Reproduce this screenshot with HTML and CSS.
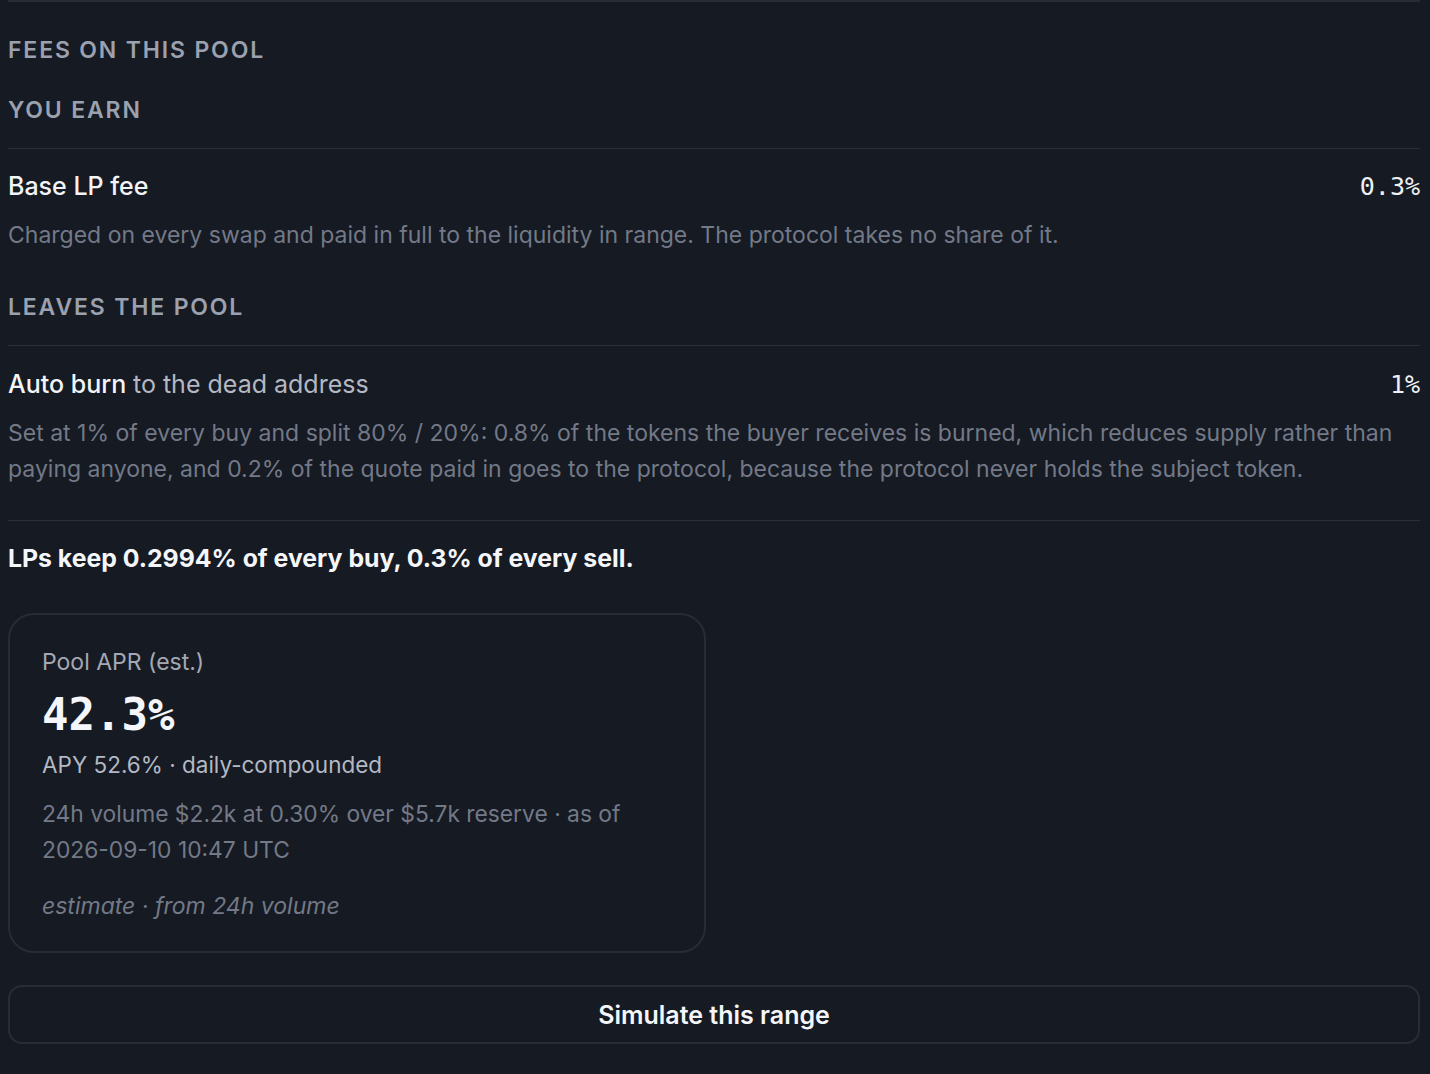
FILE: index.html
```html
<!DOCTYPE html>
<html>
<head>
<meta charset="utf-8">
<link rel="stylesheet" href="styles.css">
</head>
<body>
<section class="fees">
  <h2 class="eyebrow">Fees on this pool</h2>
  <h3 class="group-title">You earn</h3>
  <div class="fee-row">
    <div class="fee-head">
      <span class="fee-name">Base LP fee</span>
      <span class="fee-value">0.3%</span>
    </div>
    <p class="fee-desc">Charged on every swap and paid in full to the liquidity in range. The protocol takes no share of it.</p>
  </div>
  <h3 class="group-title">Leaves the pool</h3>
  <div class="fee-row">
    <div class="fee-head">
      <span class="fee-name">Auto burn <span class="fee-sub">to the dead address</span></span>
      <span class="fee-value">1%</span>
    </div>
    <p class="fee-desc">Set at 1% of every buy and split 80% / 20%: 0.8% of the tokens the buyer receives is burned, which reduces supply rather than paying anyone, and 0.2% of the quote paid in goes to the protocol, because the protocol never holds the subject token.</p>
  </div>
  <p class="summary">LPs keep 0.2994% of every buy, 0.3% of every sell.</p>
  <div class="cards">
    <div class="card">
      <div class="card-label">Pool APR (est.)</div>
      <div class="card-value">42.3%</div>
      <div class="card-apy">APY 52.6% · daily-compounded</div>
      <div class="card-meta">24h volume $2.2k at 0.30% over $5.7k reserve · as of 2026-09-10 10:47 UTC</div>
      <div class="card-note">estimate · from 24h volume</div>
    </div>
  </div>
  <button class="simulate">Simulate this range</button>
</section>
</body>
</html>
```

FILE: styles.css
```css
html, body {
  background: #161a23;
}
body {
  margin: 0;
  padding: 0 10px 0 8px;
  font-family: Inter, "Noto Sans", sans-serif;
  color: #eef0f4;
}
.fees {
  border-top: 2px solid #272c37;
  padding-top: 30px;
}
.eyebrow, .group-title {
  margin: 0;
  font-size: 23px;
  font-weight: 600;
  letter-spacing: 0.08em;
  text-transform: uppercase;
  color: #9ba1ae;
  line-height: 36px;
}
.group-title {
  margin-top: 24px;
  padding-bottom: 20px;
  border-bottom: 1px solid #2b303b;
}
.fee-row + .group-title {
  margin-top: 36px;
}
.fee-row {
  padding-top: 19px;
}
.fee-row + .group-title + .fee-row {
  padding-top: 20px;
}
.fee-head {
  display: flex;
  justify-content: space-between;
  align-items: baseline;
  line-height: 36px;
}
.fee-name {
  font-size: 25px;
  font-weight: 500;
  color: #f2f4f7;
}
.fee-sub {
  font-weight: 400;
  color: #b3b8c2;
}
.fee-value {
  font-family: "DejaVu Sans Mono", monospace;
  font-size: 25px;
  color: #eef0f4;
}
.fee-desc {
  margin: 12px 0 0;
  font-size: 23px;
  line-height: 36px;
  color: #737987;
}
.summary {
  margin: 33px 0 0;
  padding-top: 19px;
  border-top: 1px solid #2b303b;
  font-size: 24.8px;
  font-weight: 700;
  line-height: 36px;
  color: #f4f6f9;
}
.cards {
  display: grid;
  grid-template-columns: 1fr 1fr;
  gap: 16px;
  margin-top: 37px;
}
.card {
  border: 2px solid #272c37;
  border-radius: 26px;
  padding: 31px 32px 27px;
}
.card-label {
  font-size: 23px;
  line-height: 32px;
  color: #a3a8b3;
}
.card-value {
  font-family: "DejaVu Sans Mono", monospace;
  font-size: 44px;
  font-weight: 700;
  line-height: 60px;
  margin-top: 7px;
  color: #f4f6f9;
}
.card-apy {
  margin-top: 2px;
  font-size: 22.5px;
  line-height: 36px;
  color: #b3b8c2;
}
.card-meta {
  margin-top: 13px;
  font-size: 22.8px;
  line-height: 36px;
  color: #737987;
}
.card-note {
  margin-top: 20px;
  font-size: 23px;
  line-height: 36px;
  font-style: italic;
  color: #737987;
}
.simulate {
  display: block;
  width: 100%;
  margin-top: 32px;
  height: 59px;
  background: transparent;
  border: 2px solid #272c37;
  border-radius: 14px;
  font-family: Inter, "Noto Sans", sans-serif;
  font-size: 25px;
  font-weight: 600;
  color: #f4f6f9;
  cursor: pointer;
}
```
